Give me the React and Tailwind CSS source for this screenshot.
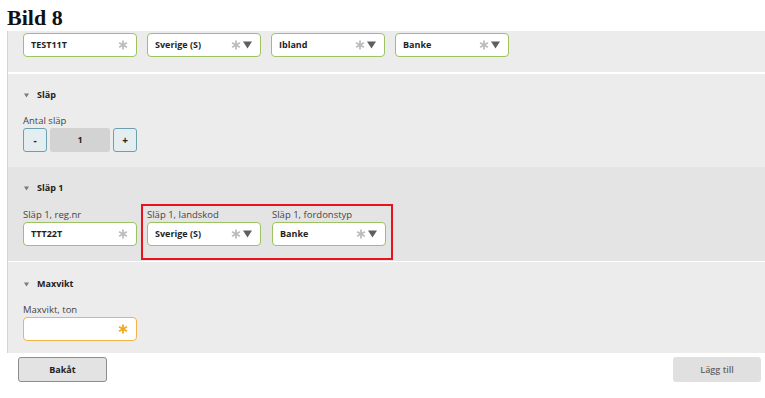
import React from 'react'

const Star = ({ color = '#b9b9b9' }) => (
  <svg width="10" height="10" viewBox="0 0 10 10" className="shrink-0">
    <g stroke={color} strokeWidth="1.8" strokeLinecap="butt">
      <line x1="5" y1="0.5" x2="5" y2="9.5" />
      <line x1="1.1" y1="2.75" x2="8.9" y2="7.25" />
      <line x1="1.1" y1="7.25" x2="8.9" y2="2.75" />
    </g>
  </svg>
)

const Caret = () => (
  <svg width="9" height="8" viewBox="0 0 9 8" className="shrink-0">
    <polygon points="0,0.5 9,0.5 4.5,7.5" fill="#5f5f5f" />
  </svg>
)

function Field({ value, select, warn }) {
  return (
    <div
      className={`w-[114px] h-[24px] bg-white rounded-[4px] border flex items-center pl-[7px] pr-[8px] ${
        warn ? 'border-[#f2b34a]' : 'border-[#9cc262]'
      }`}
    >
      <span className="flex-1 text-[9px] font-bold text-[#1f1f1f] truncate">{value}</span>
      <div className="flex items-center gap-[2px]">
        <Star color={warn ? '#f2a81f' : '#bdbdbd'} />
        {select && <Caret />}
      </div>
    </div>
  )
}

function Header({ title }) {
  return (
    <div className="flex items-center h-[14px]">
      <svg width="5" height="5" viewBox="0 0 5 5" className="ml-[1px] mr-[8px]">
        <polygon points="0,0.5 5,0.5 2.5,4.5" fill="#7a7a7a" />
      </svg>
      <span className="text-[9px] font-bold text-[#222]">{title}</span>
    </div>
  )
}

function Label({ children }) {
  return <div className="h-[13px] text-[9.5px] leading-[13px] text-[#454545] mb-[1px]">{children}</div>
}

export default function App() {
  return (
    <div className="w-[765px] h-[398px] bg-white overflow-hidden" style={{ fontFamily: '"Open Sans", sans-serif' }}>
      <div className="h-[31px] pl-[7px] pt-[6px]">
        <h1 className="text-[22px] leading-[24px] font-bold text-[#111]" style={{ fontFamily: '"Liberation Serif", serif' }}>
          Bild 8
        </h1>
      </div>

      <div className="ml-[7px] border-l border-[#d4d4d4]">
        {/* top row */}
        <div className="bg-[#ececec] h-[41px] pt-[2px] pl-[15px] flex gap-[10px]">
          <Field value="TEST11T" />
          <Field value="Sverige (S)" select />
          <Field value="Ibland" select />
          <Field value="Banke" select />
        </div>
        <div className="h-[2px] bg-white" />

        {/* Släp */}
        <div className="bg-[#ececec] h-[93px] pt-[14px] pl-[15px]">
          <Header title="Släp" />
          <div className="mt-[12px]">
            <Label>Antal släp</Label>
            <div className="flex gap-[3px] h-[24px]">
              <div className="w-[24px] rounded-[3px] border border-[#6e9fae] bg-[#e4edf0] flex items-center justify-center text-[10px] font-bold text-[#222]">-</div>
              <div className="w-[60px] rounded-[3px] bg-[#d3d3d3] flex items-center justify-center text-[9px] font-bold text-[#222]">1</div>
              <div className="w-[24px] rounded-[3px] border border-[#6e9fae] bg-[#e4edf0] flex items-center justify-center text-[10px] font-bold text-[#222]">+</div>
            </div>
          </div>
        </div>

        {/* Släp 1 */}
        <div className="bg-[#e4e4e4] h-[94px] pt-[14px] pl-[15px]">
          <Header title="Släp 1" />
          <div className="relative mt-[13px] flex gap-[10px]">
            <div>
              <Label>Släp 1, reg.nr</Label>
              <Field value="TTT22T" />
            </div>
            <div>
              <Label>Släp 1, landskod</Label>
              <Field value="Sverige (S)" select />
            </div>
            <div className="ml-[1px]">
              <Label>Släp 1, fordonstyp</Label>
              <Field value="Banke" select />
            </div>
            <div className="absolute left-[118px] top-[-4px] w-[252px] h-[56px] border-2 border-[#e8141c] pointer-events-none" />
          </div>
        </div>
        <div className="h-[1px] bg-white" />

        {/* Maxvikt */}
        <div className="bg-[#ececec] h-[91px] pt-[15px] pl-[15px]">
          <Header title="Maxvikt" />
          <div className="mt-[12px]">
            <Label>Maxvikt, ton</Label>
            <Field value="" warn />
          </div>
        </div>
      </div>

      <div className="flex justify-between mt-[4px] pl-[18px] pr-[4px]">
        <button className="w-[89px] h-[25px] rounded-[3px] border border-[#8c8c8c] bg-[#e3e3e3] text-[9px] font-bold text-[#222]">
          Bakåt
        </button>
        <button className="w-[88px] h-[25px] rounded-[3px] bg-[#e0e0e0] text-[9px] font-semibold text-[#666]">
          Lägg till
        </button>
      </div>
    </div>
  )
}
